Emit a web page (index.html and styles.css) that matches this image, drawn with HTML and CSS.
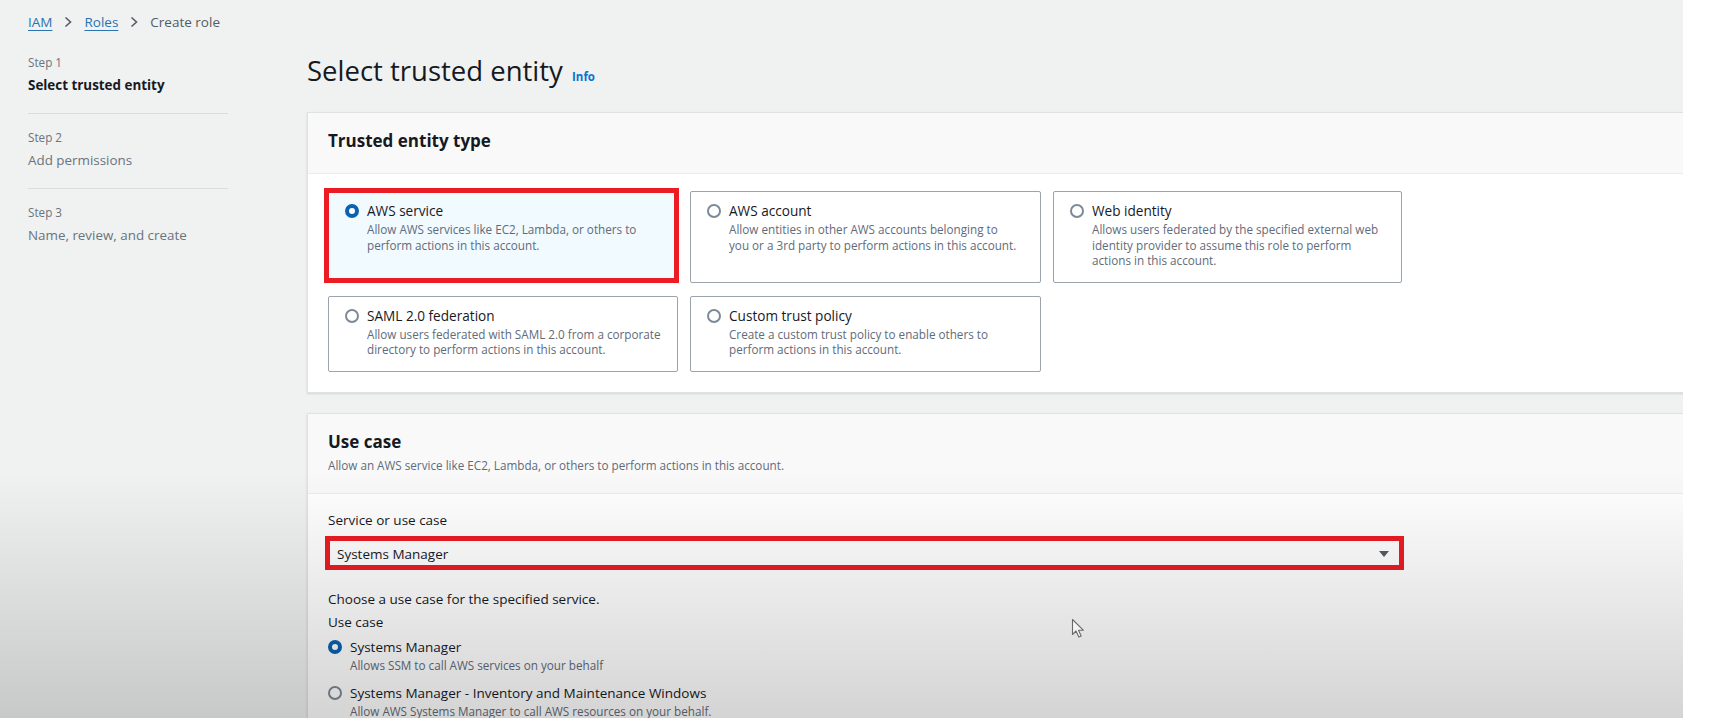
FILE: index.html
```html
<!DOCTYPE html>
<html lang="en">
<head>
<meta charset="utf-8">
<title>Create role</title>
<link rel="stylesheet" href="styles.css">
</head>
<body>
<div class="screen">
  <nav class="crumbs">
    <a href="#">IAM</a>
    <svg class="chev" width="8" height="12" viewBox="0 0 8 12"><polyline points="1.5,1.5 6.5,6 1.5,10.5" fill="none" stroke="#545b64" stroke-width="1.6"/></svg>
    <a href="#">Roles</a>
    <svg class="chev" width="8" height="12" viewBox="0 0 8 12"><polyline points="1.5,1.5 6.5,6 1.5,10.5" fill="none" stroke="#545b64" stroke-width="1.6"/></svg>
    <span class="cur">Create role</span>
  </nav>
  <div class="layout">
    <aside class="steps">
      <div class="step">
        <div class="step-num">Step 1</div>
        <div class="step-title active">Select trusted entity</div>
      </div>
      <div class="step">
        <div class="step-num">Step 2</div>
        <div class="step-title">Add permissions</div>
      </div>
      <div class="step">
        <div class="step-num">Step 3</div>
        <div class="step-title">Name, review, and create</div>
      </div>
    </aside>
    <main class="main">
      <h1 class="page-title">Select trusted entity <a class="info" href="#">Info</a></h1>

      <section class="card">
        <header class="card-head">
          <h2>Trusted entity type</h2>
        </header>
        <div class="card-body">
          <div class="tiles">
            <div class="tile selected">
              <span class="radio on"></span>
              <div class="tile-text">
                <div class="tile-title">AWS service</div>
                <div class="tile-desc">Allow AWS services like EC2, Lambda, or others to<br>perform actions in this account.</div>
              </div>
              <span class="hl hl-tile"></span>
            </div>
            <div class="tile">
              <span class="radio"></span>
              <div class="tile-text">
                <div class="tile-title">AWS account</div>
                <div class="tile-desc">Allow entities in other AWS accounts belonging to<br>you or a 3rd party to perform actions in this account.</div>
              </div>
            </div>
            <div class="tile">
              <span class="radio"></span>
              <div class="tile-text">
                <div class="tile-title">Web identity</div>
                <div class="tile-desc">Allows users federated by the specified external web<br>identity provider to assume this role to perform<br>actions in this account.</div>
              </div>
            </div>
            <div class="tile">
              <span class="radio"></span>
              <div class="tile-text">
                <div class="tile-title">SAML 2.0 federation</div>
                <div class="tile-desc">Allow users federated with SAML 2.0 from a corporate<br>directory to perform actions in this account.</div>
              </div>
            </div>
            <div class="tile">
              <span class="radio"></span>
              <div class="tile-text">
                <div class="tile-title">Custom trust policy</div>
                <div class="tile-desc">Create a custom trust policy to enable others to<br>perform actions in this account.</div>
              </div>
            </div>
          </div>
        </div>
      </section>

      <section class="card">
        <header class="card-head">
          <h2>Use case</h2>
          <p class="card-desc">Allow an AWS service like EC2, Lambda, or others to perform actions in this account.</p>
        </header>
        <div class="card-body usecase-body">
          <div class="field-label">Service or use case</div>
          <div class="select">
            <span>Systems Manager</span>
            <svg class="caret" width="12" height="8" viewBox="0 0 12 8"><polygon points="1,1 11,1 6,7" fill="#545b64"/></svg>
            <span class="hl hl-select"></span>
          </div>
          <p class="hint">Choose a use case for the specified service.</p>
          <div class="field-label small-gap">Use case</div>
          <div class="radio-row">
            <span class="radio on"></span>
            <div>
              <div class="opt-title">Systems Manager</div>
              <div class="opt-desc">Allows SSM to call AWS services on your behalf</div>
            </div>
          </div>
          <div class="radio-row second">
            <span class="radio"></span>
            <div>
              <div class="opt-title">Systems Manager - Inventory and Maintenance Windows</div>
              <div class="opt-desc">Allow AWS Systems Manager to call AWS resources on your behalf.</div>
            </div>
          </div>
        </div>
      </section>
    </main>
  </div>
  <div class="vignette"></div>
  <svg class="cursor" width="14" height="21" viewBox="0 0 14 21"><path d="M1.5 1.5 L1.5 16.5 L5 13 L7.8 19 L10.2 18 L7.5 12.2 L12.3 12.2 Z" fill="#f4f4f4" stroke="#6a6a6a" stroke-width="1.1" stroke-linejoin="round"/></svg>
</div>
</body>
</html>
```

FILE: styles.css
```css
* { box-sizing: border-box; }

body {
  margin: 0;
  background: #ffffff;
  font-family: "Open Sans", "Noto Sans", sans-serif;
  color: #16191f;
}

.screen {
  position: relative;
  width: 1683px;
  height: 718px;
  overflow: hidden;
  background: #f0f1f1;
}

/* breadcrumb */
.crumbs {
  display: flex;
  align-items: center;
  gap: 12px;
  height: 32px;
  padding: 12px 0 0 28px;
  margin-bottom: 7px;
  font-size: 13.5px;
  line-height: 20px;
}
.crumbs a {
  color: #2b72b0;
  text-decoration: underline;
  text-underline-offset: 3px;
  text-decoration-thickness: 1px;
}
.crumbs .cur { color: #545b64; }
.chev { flex: none; }

/* layout */
.layout {
  display: flex;
  padding-left: 28px;
}

.steps {
  flex: none;
  width: 200px;
  margin-right: 79px;
}
.step {
  padding: 15px 0 18px;
  border-bottom: 1px solid #dadcde;
}
.step:last-child { border-bottom: none; }
.step-num {
  font-size: 11.7px;
  line-height: 16px;
  color: #6b737c;
}
.step-title {
  margin-top: 5px;
  font-size: 13.4px;
  line-height: 20px;
  color: #6b737c;
}
.step-title.active {
  font-weight: 700;
  color: #16191f;
}

.main {
  flex: 1;
  min-width: 0;
  margin-right: -30px;
}

.page-title {
  height: 36px;
  margin: 14px 0 23px;
  font-size: 27.5px;
  line-height: 36px;
  font-weight: 400;
  color: #16191f;
}
.info {
  margin-left: 2px;
  font-size: 11.5px;
  line-height: 1;
  font-weight: 700;
  color: #0972d3;
  text-decoration: none;
}

/* cards */
.card {
  background: #ffffff;
  border: 1px solid #dfe2e3;
  box-shadow: 0 1px 2px rgba(0, 28, 36, 0.12);
}
.card + .card { margin-top: 20px; }

.card-head {
  padding: 16px 20px 20px;
  background: #f9f9f9;
  border-bottom: 1px solid #eaeded;
}
.card-head h2 {
  margin: 0;
  font-size: 17px;
  line-height: 24px;
  font-weight: 700;
}
.card-desc {
  margin: 3px 0 0;
  font-size: 11.7px;
  line-height: 16px;
  color: #5f6b7a;
}

.card-body {
  padding: 17px 20px 20px;
}

/* tiles */
.tiles {
  display: grid;
  grid-template-columns: 350px 351px 349px;
  column-gap: 12px;
  row-gap: 13px;
}
.tile {
  position: relative;
  display: flex;
  gap: 8px;
  padding: 10px 10px 13px 16px;
  border: 1px solid #9ba4ad;
  border-radius: 2px;
  background: #ffffff;
}
.tile.selected {
  background: #f1faff;
  border-color: #0972d3;
}
.tile-title {
  margin-bottom: 2px;
  font-size: 13.6px;
  line-height: 18px;
  color: #16191f;
}
.tile-desc {
  font-size: 11.7px;
  line-height: 15.5px;
  color: #5f6b7a;
  white-space: nowrap;
}
.tile .radio { margin-top: 2px; }

/* radios */
.radio {
  flex: none;
  width: 14px;
  height: 14px;
  margin-top: 3px;
  border: 2px solid #7d8998;
  border-radius: 50%;
  background: #ffffff;
}
.radio.on {
  border: 4.5px solid #0b62b3;
}

/* highlight marks */
.hl {
  position: absolute;
  border: 5px solid #ec1c24;
  pointer-events: none;
}
.hl-tile {
  top: -4px;
  left: -5px;
  right: -2px;
  bottom: -1px;
}
.hl-select {
  top: -3px;
  left: -4px;
  right: -3px;
  bottom: -1px;
}

/* use case form */
.usecase-body {
  padding-top: 16px;
}
.field-label {
  font-size: 13.5px;
  line-height: 20px;
  color: #16191f;
}
.select {
  position: relative;
  display: flex;
  align-items: center;
  justify-content: space-between;
  width: 1074px;
  height: 32px;
  margin-top: 8px;
  padding: 0 11px 0 8px;
  border: 1px solid #aab7b8;
  background: #ffffff;
  font-size: 13.5px;
  color: #16191f;
}
.hint {
  margin: 19px 0 0;
  font-size: 13.5px;
  line-height: 20px;
}
.field-label.small-gap { margin-top: 3px; }

.radio-row {
  display: flex;
  gap: 8px;
  margin-top: 5px;
}
.radio-row.second { margin-top: 10px; }
.opt-title {
  font-size: 13.5px;
  line-height: 20px;
}
.opt-desc {
  font-size: 11.7px;
  line-height: 16px;
  color: #5f6b7a;
}

/* video vignette over the page */
.vignette {
  position: absolute;
  inset: 0;
  pointer-events: none;
  background: linear-gradient(to bottom, rgba(0, 0, 0, 0) 0, rgba(0, 0, 0, 0) 470px, rgba(0, 0, 0, 0.17) 718px);
}

.cursor {
  position: absolute;
  left: 1071px;
  top: 618px;
}
```
